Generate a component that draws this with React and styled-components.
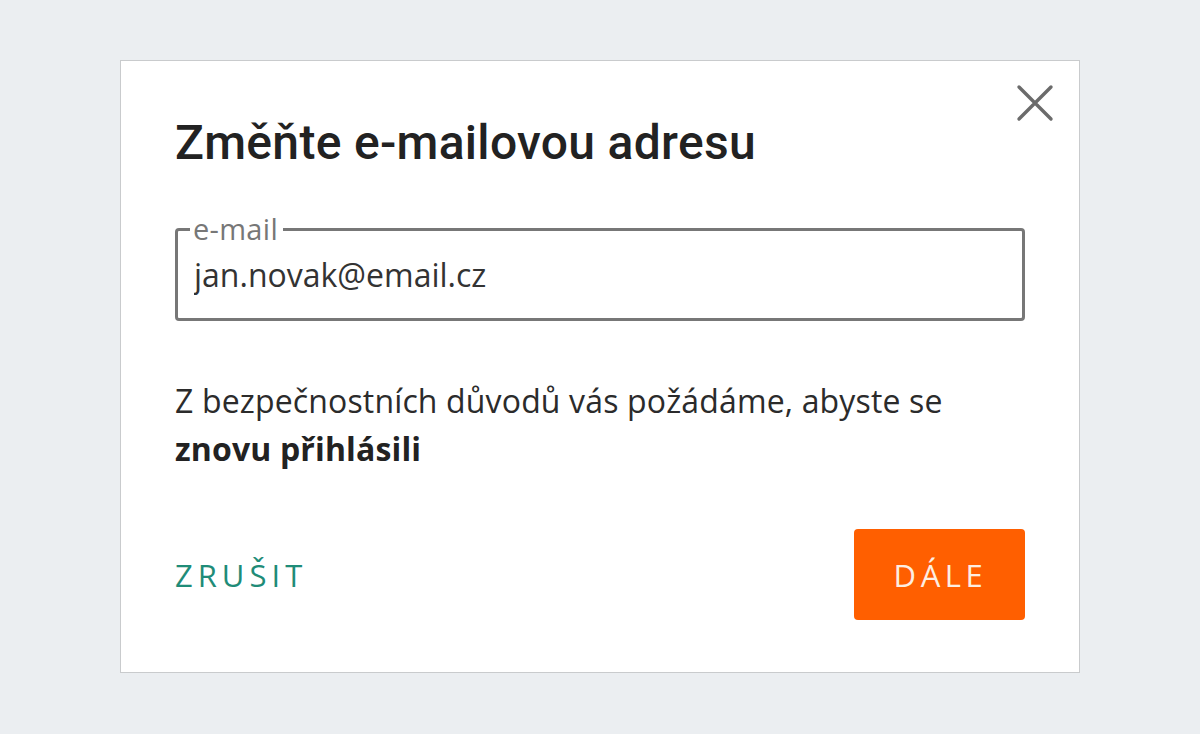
import React from "react";
import styled, { createGlobalStyle } from "styled-components";

const GlobalStyle = createGlobalStyle`
  html, body {
    margin: 0;
    padding: 0;
    background: #ebeef1;
  }
  * {
    box-sizing: border-box;
  }
`;

const Page = styled.div`
  width: 1200px;
  height: 734px;
  padding-top: 60px;
  display: flex;
  justify-content: center;
  align-items: flex-start;
`;

const Modal = styled.div`
  position: relative;
  width: 960px;
  height: 613px;
  background: #fff;
  border: 1px solid #c9cbcd;
  padding: 50px 54px 0 54px;
  display: flex;
  flex-direction: column;
`;

const CloseButton = styled.button`
  position: absolute;
  top: 22px;
  right: 24px;
  width: 40px;
  height: 40px;
  padding: 0;
  border: none;
  background: transparent;
  cursor: pointer;
  display: flex;
  align-items: center;
  justify-content: center;
  color: #6b6b6b;
`;

const Title = styled.h1`
  margin: 0;
  font-family: Roboto, "Liberation Sans", sans-serif;
  font-weight: 500;
  font-size: 48px;
  line-height: 64px;
  letter-spacing: 0.3px;
  color: #222;
`;

const Field = styled.fieldset`
  margin: 40px 0 0 0;
  padding: 0 16px 0 16px;
  height: 106px;
  border: 3px solid #777;
  border-radius: 4px;

  legend {
    padding: 0 5px 0 3px;
    margin-left: -4px;
    font-family: "Open Sans", sans-serif;
    font-size: 29px;
    line-height: 28px;
    letter-spacing: 0.3px;
    color: #777;
  }
`;

const Input = styled.input`
  display: block;
  width: 100%;
  border: none;
  outline: none;
  padding: 0;
  margin-top: 10px;
  font-family: "Open Sans", sans-serif;
  font-size: 32px;
  line-height: 44px;
  height: 44px;
  color: #333;
  background: transparent;
`;

const Notice = styled.p`
  margin: 56px 0 0 0;
  font-family: "Open Sans", sans-serif;
  font-size: 32px;
  line-height: 48px;
  letter-spacing: 0.15px;
  color: #2b2b2b;

  strong {
    font-weight: 700;
    color: #222;
  }
`;

const Actions = styled.div`
  margin-top: 56px;
  display: flex;
  justify-content: space-between;
  align-items: center;
`;

const TextButton = styled.button`
  border: none;
  background: transparent;
  padding: 0;
  font-family: "Open Sans", sans-serif;
  font-size: 31px;
  letter-spacing: 5px;
  color: #1f8c78;
  cursor: pointer;
`;

const PrimaryButton = styled.button`
  width: 171px;
  height: 91px;
  border: none;
  border-radius: 4px;
  background: #ff5f00;
  color: #fdeee2;
  font-family: "Open Sans", sans-serif;
  font-size: 31px;
  letter-spacing: 4.6px;
  padding: 0 0 0 2px;
  cursor: pointer;
`;

export default function App() {
  return (
    <>
      <GlobalStyle />
      <Page>
        <Modal>
          <CloseButton aria-label="Zavřít">
            <svg width="38" height="38" viewBox="0 0 38 38">
              <path
                d="M3 3 L35 35 M35 3 L3 35"
                stroke="currentColor"
                strokeWidth="3.4"
                strokeLinecap="round"
              />
            </svg>
          </CloseButton>
          <Title>Změňte e-mailovou adresu</Title>
          <Field>
            <legend>e-mail</legend>
            <Input defaultValue="jan.novak@email.cz" />
          </Field>
          <Notice>
            Z bezpečnostních důvodů vás požádáme, abyste se
            <br />
            <strong>znovu přihlásili</strong>
          </Notice>
          <Actions>
            <TextButton>ZRUŠIT</TextButton>
            <PrimaryButton>DÁLE</PrimaryButton>
          </Actions>
        </Modal>
      </Page>
    </>
  );
}
